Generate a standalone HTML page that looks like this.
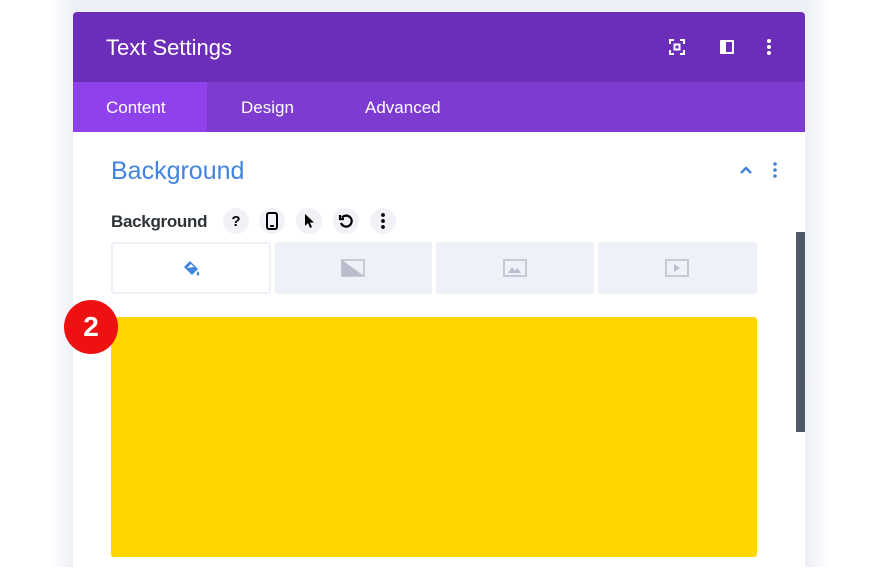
<!DOCTYPE html>
<html><head><style>
*{margin:0;padding:0;box-sizing:border-box}
body{width:880px;height:567px;overflow:hidden;background:#fff;font-family:"Liberation Sans",sans-serif;position:relative}
.shadow{position:absolute;left:50px;top:0;width:780px;height:567px;background:linear-gradient(90deg,#fff,#eef0f7 23px,#eef0f7 757px,#fff);}
.panel{position:absolute;left:73px;top:12px;width:732px;height:560px;background:#fff;border-radius:4px 4px 0 0;overflow:hidden}
.hdr{height:70px;background:#6c2eb9;color:#fff;font-size:22px;padding:23px 0 0 33px}
.tabs{height:50px;background:#7e3bd0;color:#fff;font-size:17px;position:relative}
.tabs span{position:absolute;top:16px}
.act{position:absolute;left:0;top:0;width:134px;height:50px;background:#8f42ec}
.ic{position:absolute;color:#fff}
.circ{position:absolute;top:196px;width:26px;height:26px;border-radius:50%;background:#f0f2f7;display:flex;align-items:center;justify-content:center;font-weight:bold;font-size:15px;color:#000}
.bt{position:absolute;top:230px;height:52px;background:#eff1f8;border-radius:3px}
</style></head><body>
<div class="shadow"></div>
<div class="panel">
<div class="hdr">Text Settings</div>
<svg class="ic" style="left:596px;top:27px" width="16" height="16" viewBox="0 0 16 16" fill="none" stroke="#fff" stroke-width="2"><path d="M1 5V1h4M11 1h4v4M15 11v4h-4M5 15H1v-4"/><rect x="5.5" y="5.5" width="5" height="5"/></svg>
<svg class="ic" style="left:646px;top:27px" width="16" height="16" viewBox="0 0 16 16"><rect x="1" y="1" width="14" height="14" rx="1" fill="#fff"/><rect x="7" y="3" width="6" height="10" fill="#6c2eb9"/></svg>
<svg class="ic" style="left:694px;top:27px" width="4" height="16" viewBox="0 0 4 16" fill="#fff"><circle cx="2" cy="2" r="2"/><circle cx="2" cy="8" r="2"/><circle cx="2" cy="14" r="2"/></svg>
<div class="tabs"><div class="act"></div><span style="left:33px">Content</span><span style="left:168px">Design</span><span style="left:292px">Advanced</span></div>
<div style="position:absolute;left:38px;top:145px;font-size:25px;color:#4383e0">Background</div>
<svg style="position:absolute;left:666px;top:153px" width="14" height="10" viewBox="0 0 14 10" fill="none" stroke="#4383e0" stroke-width="2.5"><path d="M2 8l5-5 5 5"/></svg>
<svg style="position:absolute;left:700px;top:150px" width="4" height="16" viewBox="0 0 4 16" fill="#4383e0"><circle cx="2" cy="2" r="1.8"/><circle cx="2" cy="8" r="1.8"/><circle cx="2" cy="14" r="1.8"/></svg>
<div style="position:absolute;left:38px;top:200px;font-size:17px;color:#2e3338;font-weight:bold;letter-spacing:-0.3px">Background</div>
<div class="circ" style="left:150px">?</div>
<div class="circ" style="left:186px"><svg width="12" height="18" viewBox="0 0 12 18"><rect x="1" y="1" width="10" height="16" rx="2" fill="none" stroke="#000" stroke-width="2"/><rect x="4" y="13" width="4" height="2" fill="#000"/></svg></div>
<div class="circ" style="left:223px"><svg width="10" height="14" viewBox="0 0 10 14"><path d="M1 0v12l3-3 2 5 2-1-2-4.5h4z" fill="#000"/></svg></div>
<div class="circ" style="left:260px"><svg width="16" height="16" viewBox="0 0 16 16" fill="none" stroke="#000" stroke-width="2.2"><path d="M4 4.5A5.5 5.5 0 1 1 3 10"/><path d="M2 2v4h4" /></svg></div>
<div class="circ" style="left:297px"><svg width="4" height="16" viewBox="0 0 4 16" fill="#000"><circle cx="2" cy="2" r="1.9"/><circle cx="2" cy="8" r="1.9"/><circle cx="2" cy="14" r="1.9"/></svg></div>
<div class="bt" style="left:38px;width:160px;background:#fff;border:2px solid #eff1f8"></div>
<div class="bt" style="left:202px;width:157px"></div>
<div class="bt" style="left:363px;width:158px"></div>
<div class="bt" style="left:525px;width:159px"></div>
<svg style="position:absolute;left:109px;top:247px" width="20" height="20" viewBox="0 0 20 20"><path d="M2 8l6-6 8 8-6 6z" fill="#4383e0"/><path d="M5 9l4-4 3 3z" fill="#fff"/><path d="M16 12q2.5 3.5 0 5q-2.5-1.5 0-5z" fill="#4383e0"/></svg>
<svg style="position:absolute;left:268px;top:247px" width="24" height="18" viewBox="0 0 24 18"><rect x="1" y="1" width="22" height="16" fill="none" stroke="#c5c9d8" stroke-width="2"/><path d="M1 1l22 16H1z" fill="#b9bdcc"/></svg>
<svg style="position:absolute;left:430px;top:247px" width="24" height="18" viewBox="0 0 24 18"><rect x="1" y="1" width="22" height="16" fill="none" stroke="#c5c9d8" stroke-width="2"/><path d="M5 14l4-6 3 4 2-3 4 5z" fill="#b9bdcc"/></svg>
<svg style="position:absolute;left:592px;top:247px" width="24" height="18" viewBox="0 0 24 18"><rect x="1" y="1" width="22" height="16" fill="none" stroke="#c5c9d8" stroke-width="2"/><path d="M9 5v8l6-4z" fill="#b9bdcc"/></svg>
<div style="position:absolute;left:38px;top:305px;width:646px;height:240px;background:#ffd600;border-radius:3px"></div>
<div style="position:absolute;left:723px;top:220px;width:9px;height:200px;background:#4f5966"></div>
</div>
<div style="position:absolute;left:64px;top:300px;width:54px;height:54px;border-radius:50%;background:#ee1111;color:#fff;font-weight:bold;font-size:28px;text-align:center;line-height:54px">2</div>
</body></html>
